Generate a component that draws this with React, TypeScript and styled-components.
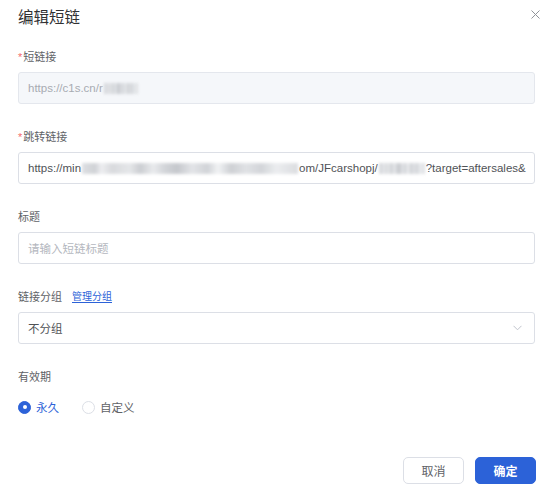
import React from "react";
import styled, { createGlobalStyle } from "styled-components";

const Global = createGlobalStyle`
  html, body {
    margin: 0;
    padding: 0;
    background: #ffffff;
  }
  body {
    font-family: "Liberation Sans", "Noto Sans CJK SC", sans-serif;
    color: #606266;
  }
  * { box-sizing: border-box; }
`;

const BLUE = "#2c62d8";

const Dialog = styled.div`
  width: 553px;
  height: 500px;
  padding: 8px 18px 0 18px;
  display: flex;
  flex-direction: column;
  background: #fff;
`;

const Header = styled.div`
  display: flex;
  align-items: flex-start;
  justify-content: space-between;
  height: 20px;
  margin-bottom: 21px;
`;

const Title = styled.h2`
  margin: 0;
  font-size: 15.5px;
  line-height: 20px;
  font-weight: 400;
  color: #303133;
`;

const CloseButton = styled.button`
  border: 0;
  background: none;
  padding: 0;
  margin: 1px -5px 0 0;
  width: 10px;
  height: 10px;
  display: flex;
  align-items: center;
  justify-content: center;
  cursor: pointer;
`;

const Form = styled.div`
  display: flex;
  flex-direction: column;
  gap: 25px;
`;

const Field = styled.div`
  display: flex;
  flex-direction: column;
  gap: 7px;
`;

const Label = styled.div`
  display: flex;
  align-items: center;
  gap: 10px;
  height: 16px;
  font-size: 11px;
  line-height: 16px;
  color: #606266;
`;

const Required = styled.span`
  color: #f56c6c;
  margin-right: 1px;
`;

const ManageLink = styled.a`
  font-size: 10px;
  color: ${BLUE};
  text-decoration: underline;
  text-underline-offset: 2px;
  cursor: pointer;
`;

const Box = styled.div<{ $disabled?: boolean }>`
  height: 32px;
  display: flex;
  align-items: center;
  padding: 0 9px;
  border: 1px solid ${(p) => (p.$disabled ? "#e4e7ed" : "#dcdfe6")};
  border-radius: 3px;
  background: ${(p) => (p.$disabled ? "#f5f7fa" : "#fff")};
  font-size: 11.5px;
  white-space: nowrap;
  overflow: hidden;
  color: ${(p) => (p.$disabled ? "#a8abb2" : "#505256")};
`;

const Placeholder = styled.span`
  color: #b4b7be;
`;

/* masked stretch of a URL: soft, uneven grey smudges in place of the characters */
const Redacted = styled.span<{ $w: number }>`
  display: inline-block;
  flex: none;
  width: ${(p) => p.$w}px;
  height: 11px;
  margin: 0 1px;
  background: linear-gradient(
    90deg,
    #d6d8dc 0%,
    #c4c7cc 6%,
    #e9eaed 9%,
    #cfd1d5 14%,
    #dfe1e4 22%,
    #bfc2c7 27%,
    #e4e6e9 33%,
    #c9ccd1 38%,
    #b7bac0 44%,
    #dcdee2 51%,
    #c6c9ce 58%,
    #eef0f2 63%,
    #c2c5ca 69%,
    #d9dbdf 76%,
    #c8cbd0 83%,
    #e7e9ec 90%,
    #d2d4d8 100%
  );
  filter: blur(1.8px);
  opacity: 0.8;
`;

const SelectBox = styled(Box)`
  justify-content: space-between;
  padding-right: 12px;
  color: #505256;
`;

const RadioRow = styled.div`
  height: 30px;
  display: flex;
  align-items: center;
  gap: 23px;
`;

const RadioItem = styled.label<{ $checked?: boolean }>`
  display: flex;
  align-items: center;
  gap: 5px;
  font-size: 11.5px;
  color: ${(p) => (p.$checked ? BLUE : "#606266")};
  cursor: pointer;
`;

const RadioDot = styled.span<{ $checked?: boolean }>`
  width: 13px;
  height: 13px;
  border-radius: 50%;
  flex: none;
  border: 1px solid ${(p) => (p.$checked ? BLUE : "#dcdfe6")};
  background: ${(p) => (p.$checked ? BLUE : "#fff")};
  display: flex;
  align-items: center;
  justify-content: center;
  &::after {
    content: "";
    width: 4px;
    height: 4px;
    border-radius: 50%;
    background: #fff;
    display: ${(p) => (p.$checked ? "block" : "none")};
  }
`;

const Footer = styled.div`
  margin-top: 35px;
  display: flex;
  justify-content: flex-end;
  gap: 11px;
  margin-right: -1px;
`;

const Button = styled.button<{ $primary?: boolean }>`
  width: 61px;
  height: 27px;
  border-radius: 5px;
  font-family: inherit;
  font-size: 12px;
  font-weight: ${(p) => (p.$primary ? 600 : 400)};
  border: 1px solid ${(p) => (p.$primary ? BLUE : "#dcdfe6")};
  background: ${(p) => (p.$primary ? BLUE : "#fff")};
  color: ${(p) => (p.$primary ? "#fff" : "#606266")};
  cursor: pointer;
`;

const CloseIcon = () => (
  <svg width="9" height="9" viewBox="0 0 9 9">
    <path d="M0.5 0.5 L8.5 8.5 M8.5 0.5 L0.5 8.5" stroke="#909399" strokeWidth="1" />
  </svg>
);

const Chevron = () => (
  <svg width="9" height="6" viewBox="0 0 9 6">
    <path d="M0.5 0.8 L4.5 4.8 L8.5 0.8" fill="none" stroke="#c0c4cc" strokeWidth="1" />
  </svg>
);

export default function App() {
  return (
    <>
      <Global />
      <Dialog>
        <Header>
          <Title>编辑短链</Title>
          <CloseButton aria-label="关闭">
            <CloseIcon />
          </CloseButton>
        </Header>

        <Form>
          <Field>
            <Label>
              <span>
                <Required>*</Required>短链接
              </span>
            </Label>
            <Box $disabled>
              <span>https://c1s.cn/r</span>
              <Redacted $w={34} />
            </Box>
          </Field>

          <Field>
            <Label>
              <span>
                <Required>*</Required>跳转链接
              </span>
            </Label>
            <Box>
              <span>https://min</span>
              <Redacted $w={216} />
              <span>om/JFcarshopj/</span>
              <Redacted $w={46} />
              <span>?target=aftersales&amp;</span>
            </Box>
          </Field>

          <Field>
            <Label>标题</Label>
            <Box>
              <Placeholder>请输入短链标题</Placeholder>
            </Box>
          </Field>

          <Field>
            <Label>
              链接分组
              <ManageLink>管理分组</ManageLink>
            </Label>
            <SelectBox>
              <span>不分组</span>
              <Chevron />
            </SelectBox>
          </Field>

          <Field>
            <Label>有效期</Label>
            <RadioRow>
              <RadioItem $checked>
                <RadioDot $checked />
                永久
              </RadioItem>
              <RadioItem>
                <RadioDot />
                自定义
              </RadioItem>
            </RadioRow>
          </Field>
        </Form>

        <Footer>
          <Button>取消</Button>
          <Button $primary>确定</Button>
        </Footer>
      </Dialog>
    </>
  );
}
